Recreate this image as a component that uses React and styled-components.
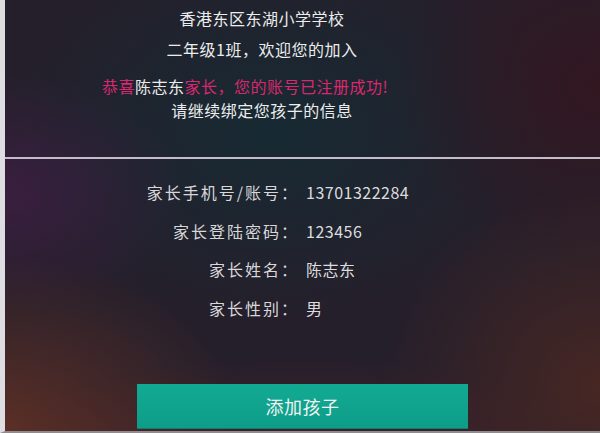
import styled, { createGlobalStyle } from "styled-components";

const Global = createGlobalStyle`
  body {
    margin: 0;
    font-family: "Noto Sans CJK SC", "Noto Sans", sans-serif;
  }
`;

const Page = styled.div`
  width: 600px;
  height: 433px;
  box-sizing: border-box;
  border-left: 5px solid #dedde2;
  border-bottom: 2px solid #8f8c90;
  display: flex;
  flex-direction: column;
  background:
    radial-gradient(ellipse 300px 220px at 0% 100%, rgba(120, 55, 35, 0.65), transparent 80%),
    radial-gradient(ellipse 360px 120px at 50% 105%, rgba(85, 35, 35, 0.6), transparent 80%),
    radial-gradient(ellipse 240px 160px at 0% 45%, rgba(75, 30, 80, 0.55), transparent 75%),
    radial-gradient(ellipse 280px 260px at 100% 90%, rgba(85, 42, 32, 0.7), transparent 78%),
    radial-gradient(ellipse 260px 220px at 100% 20%, rgba(52, 22, 32, 0.9), transparent 80%),
    radial-gradient(ellipse 320px 230px at 45% 30%, #172a33, transparent 85%),
    #251f2b;
  overflow: hidden;
`;

const Header = styled.div`
  height: 157px;
  box-sizing: border-box;
  padding: 7px 81px 0 0;
  display: flex;
  flex-direction: column;
  align-items: center;
  color: #ececec;
  font-size: 16px;
  letter-spacing: 0.5px;
`;

const Line = styled.div`
  line-height: 22px;
  margin-top: ${(p) => p.$gap || 0}px;
  margin-right: ${(p) => p.$shift || 0}px;
  white-space: nowrap;
`;

const Pink = styled.span`
  color: #d9286f;
`;

const Divider = styled.div`
  height: 2px;
  background: #c4bcc9;
`;

const Form = styled.div`
  padding-top: 21px;
  display: flex;
  flex-direction: column;
  gap: 14.6px;
`;

const Row = styled.div`
  display: flex;
  align-items: center;
  height: 24px;
  font-size: 16px;
  letter-spacing: 2px;
`;

const Label = styled.div`
  width: 294px;
  text-align: right;
  color: #d9d7da;
`;

const Value = styled.div`
  margin-left: 7px;
  color: #dcdcde;
  letter-spacing: 0.5px;
`;

const AddButton = styled.button`
  margin: auto 0 2px;
  align-self: center;
  width: 331px;
  height: 45px;
  border: none;
  border-bottom: 1px solid #0a7e6f;
  background: linear-gradient(#12aa93, #0d9d88);
  color: #f2f2f2;
  font-family: inherit;
  font-size: 18px;
  letter-spacing: 0.5px;
  cursor: pointer;
`;

const rows = [
  ["家长手机号/账号：", "13701322284"],
  ["家长登陆密码：", "123456"],
  ["家长姓名：", "陈志东"],
  ["家长性别：", "男"],
];

export default function App() {
  return (
    <>
      <Global />
      <Page>
        <Header>
          <Line>香港东区东湖小学学校</Line>
          <Line $gap={9}>二年级1班，欢迎您的加入</Line>
          <Line $gap={15} $shift={34}>
            <Pink>恭喜</Pink>陈志东<Pink>家长，您的账号已注册成功!</Pink>
          </Line>
          <Line $gap={2}>请继续绑定您孩子的信息</Line>
        </Header>
        <Divider />
        <Form>
          {rows.map(([label, value]) => (
            <Row key={label}>
              <Label>{label}</Label>
              <Value>{value}</Value>
            </Row>
          ))}
        </Form>
        <AddButton>添加孩子</AddButton>
      </Page>
    </>
  );
}
